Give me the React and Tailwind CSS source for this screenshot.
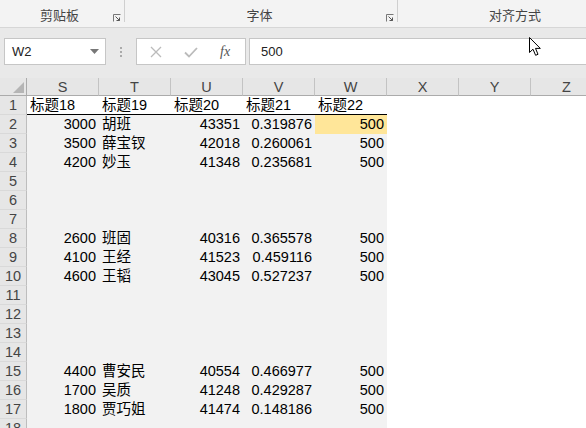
import React from 'react'

const font = { fontFamily: '"Liberation Sans", "Noto Sans CJK SC", sans-serif' }

const data = {
    2: [3000, '胡班', 43351, '0.319876', 500],
    3: [3500, '薛宝钗', 42018, '0.260061', 500],
    4: [4200, '妙玉', 41348, '0.235681', 500],
    8: [2600, '班固', 40316, '0.365578', 500],
    9: [4100, '王经', 41523, '0.459116', 500],
    10: [4600, '王韬', 43045, '0.527237', 500],
    15: [4400, '曹安民', 40554, '0.466977', 500],
    16: [1700, '吴质', 41248, '0.429287', 500],
    17: [1800, '贾巧姐', 41474, '0.148186', 500],
}

const cols = ['S', 'T', 'U', 'V', 'W', 'X', 'Y', 'Z']
const heads = ['标题18', '标题19', '标题20', '标题21', '标题22']

const Launcher = () => (
    <svg width="8" height="8" viewBox="0 0 8 8">
        <path d="M0.5 7.5V0.5H7.5" fill="none" stroke="#777" strokeWidth="1" />
        <path d="M2.5 2.5L6.5 6.5M6.5 3.5V6.5H3.5" fill="none" stroke="#555" strokeWidth="1" />
    </svg>
)

const Ribbon = () => (
    <div className="h-[28px] bg-[#f3f3f3] border-b border-[#d6d6d6] flex text-[13px] leading-[14px] text-[#444] shadow-[0_1px_2px_rgba(0,0,0,0.08)]">
        <div className="w-[125px] flex items-end pb-[4px] relative">
            <span className="flex-1 text-center pl-[6px]">剪贴板</span>
            <span className="pr-[4px] pb-[1px]"><Launcher /></span>
            <span className="absolute right-0 top-0 h-[22px] w-[1px] bg-[#cfcfcf]" />
        </div>
        <div className="w-[273px] flex items-end pb-[4px] relative">
            <span className="flex-1 text-center pl-[8px]">字体</span>
            <span className="pr-[4px] pb-[1px]"><Launcher /></span>
            <span className="absolute right-0 top-0 h-[22px] w-[1px] bg-[#cfcfcf]" />
        </div>
        <div className="flex-1 flex items-end pb-[4px]">
            <span className="pl-[91px]">对齐方式</span>
        </div>
    </div>
)

const FormulaBar = () => (
    <div className="bg-[#e9e9e9] pt-[10px] pb-[13px] flex items-stretch h-[50px] text-[13px]">
        <div className="ml-[4px] w-[102px] bg-white border border-[#c6c6c6] flex items-center justify-between pl-[7px] pr-[6px] text-[#222]">
            <span>W2</span>
            <svg width="9" height="5" viewBox="0 0 9 5"><path d="M0 0H9L4.5 5Z" fill="#777" /></svg>
        </div>
        <div className="w-[30px] flex flex-col items-center justify-center gap-[2px]">
            <span className="w-[2px] h-[2px] bg-[#aaa]" />
            <span className="w-[2px] h-[2px] bg-[#aaa]" />
            <span className="w-[2px] h-[2px] bg-[#aaa]" />
        </div>
        <div className="w-[110px] bg-white border border-[#c6c6c6] flex items-center">
            <svg width="12" height="12" viewBox="0 0 12 12" className="ml-[13px]">
                <path d="M1 1L11 11M11 1L1 11" stroke="#bbb" strokeWidth="1.3" />
            </svg>
            <svg width="14" height="12" viewBox="0 0 14 12" className="ml-[22px]">
                <path d="M1 6.5L5 10.5L13 2" fill="none" stroke="#bbb" strokeWidth="1.8" />
            </svg>
            <span className="ml-[22px] italic text-[#555] text-[14px]" style={{ fontFamily: '"Liberation Serif", serif' }}>fx</span>
        </div>
        <div className="ml-[3px] flex-1 bg-white border border-[#c6c6c6] border-r-0 flex items-center pl-[11px] text-[#222]">
            500
        </div>
    </div>
)

const Cell = ({ children, className = '' }) => (
    <div className={'h-[19px] leading-[19px] px-[3px] whitespace-nowrap overflow-hidden ' + className}>{children}</div>
)

const Sheet = () => {
    const rows = []
    for (let r = 1; r <= 18; r++) rows.push(r)

    return (
        <div className="grid grid-cols-[27px_repeat(8,72px)] text-[14.5px] text-black">
            <div className="h-[18px] bg-[#e6e6e6] border-r border-b border-[#ababab] flex items-end justify-end pr-[2px] pb-[2px]">
                <svg width="11" height="11" viewBox="0 0 11 11"><path d="M11 0V11H0Z" fill="#b5b5b5" /></svg>
            </div>
            {cols.map((c) => (
                <div key={c} className="h-[18px] leading-[18px] bg-[#e6e6e6] border-r border-b border-[#c3c3c3] border-b-[#ababab] text-center text-[#444]">
                    {c}
                </div>
            ))}
            {rows.map((r) => {
                const d = data[r]
                return (
                    <React.Fragment key={r}>
                        <div className="h-[19px] leading-[19px] bg-[#e6e6e6] border-r border-[#bdbdbd] border-b border-b-[#d9d9d9] text-center text-[#444]">
                            {r}
                        </div>
                        {r === 1 ? (
                            heads.map((h) => (
                                <Cell key={h} className="bg-white border-b border-black leading-[18px]">{h}</Cell>
                            ))
                        ) : (
                            <>
                                <Cell className="bg-[#f2f2f2] text-right">{d ? d[0] : ''}</Cell>
                                <Cell className="bg-[#f2f2f2]">{d ? d[1] : ''}</Cell>
                                <Cell className="bg-[#f2f2f2] text-right">{d ? d[2] : ''}</Cell>
                                <Cell className="bg-[#f2f2f2] text-right">{d ? d[3] : ''}</Cell>
                                <Cell className={(r === 2 ? 'bg-[#ffe699]' : 'bg-[#f2f2f2]') + ' text-right'}>{d ? d[4] : ''}</Cell>
                            </>
                        )}
                        <Cell className="bg-white" />
                        <Cell className="bg-white" />
                        <Cell className="bg-white" />
                    </React.Fragment>
                )
            })}
        </div>
    )
}

const App = () => (
    <div className="relative w-[586px] h-[428px] overflow-hidden bg-white" style={font}>
        <Ribbon />
        <FormulaBar />
        <Sheet />
        <svg width="14" height="20" viewBox="0 0 14 20" className="absolute left-[529px] top-[37px]">
            <path d="M0.5 0.5V15.5L4 12.2L6.6 18.3L9 17.3L6.5 11.4H11.3Z" fill="white" stroke="black" strokeWidth="1" strokeLinejoin="round" />
        </svg>
    </div>
)

export default App
